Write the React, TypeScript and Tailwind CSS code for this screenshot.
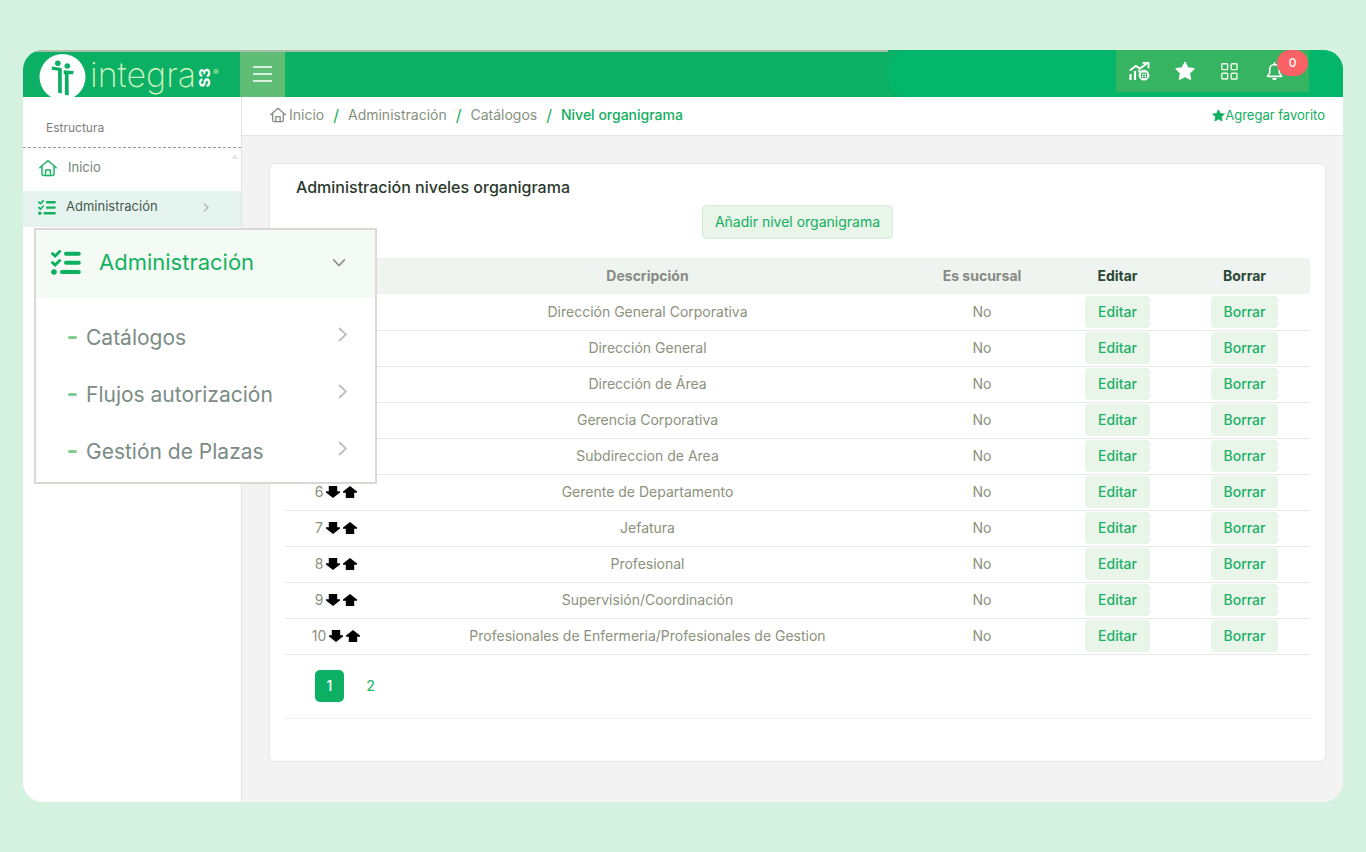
import type { ReactNode } from "react";

type Nivel = { orden: number; descripcion: string; sucursal: string };

const NIVELES: Nivel[] = [
  { orden: 1, descripcion: "Dirección General Corporativa", sucursal: "No" },
  { orden: 2, descripcion: "Dirección General", sucursal: "No" },
  { orden: 3, descripcion: "Dirección de Área", sucursal: "No" },
  { orden: 4, descripcion: "Gerencia Corporativa", sucursal: "No" },
  { orden: 5, descripcion: "Subdireccion de Area", sucursal: "No" },
  { orden: 6, descripcion: "Gerente de Departamento", sucursal: "No" },
  { orden: 7, descripcion: "Jefatura", sucursal: "No" },
  { orden: 8, descripcion: "Profesional", sucursal: "No" },
  { orden: 9, descripcion: "Supervisión/Coordinación", sucursal: "No" },
  {
    orden: 10,
    descripcion: "Profesionales de Enfermeria/Profesionales de Gestion",
    sucursal: "No",
  },
];

const SUBMENU = ["Catálogos", "Flujos autorización", "Gestión de Plazas"];

/* ==================== PÁGINA ==================== */

export default function App() {
  return (
    <div className="flex min-h-screen flex-col bg-[#d5f1df] px-[23px] py-[50px] font-['Inter',sans-serif]">
      <div className="relative flex flex-1 flex-col">
        <div className="flex flex-1 flex-col overflow-hidden rounded-[20px] bg-[#f3f3f3]">
          <Header />
          <div className="flex flex-1">
            <Sidebar />
            <main className="min-w-0 flex-1">
              <Breadcrumb />
              <NivelesCard />
            </main>
          </div>
        </div>
        <MenuFlotante />
      </div>
    </div>
  );
}

/* ==================== CABECERA ==================== */

function Header() {
  return (
    <header className="flex h-[47px] bg-[#0bb065]">
      <div className="flex min-w-0 flex-1 border-t-2 border-[#a9bfa3]">
        <a href="#" aria-label="integra S3" className="flex w-[217px] items-start pl-4">
          <LogoMark />
          <span className="ml-1 text-[34px] leading-[45px] font-extralight text-[#d0f3bd]">
            integra
          </span>
          <span className="mt-4 ml-px text-[15px] leading-4 font-bold text-white [writing-mode:sideways-lr]">
            S3
          </span>
          <span className="mt-3 text-[8px] leading-4 text-[#d5f5b4]">®</span>
        </a>
        <button
          type="button"
          aria-label="Menú"
          className="flex w-[45px] items-center justify-center bg-[#5fbd76] pb-0.5"
        >
          <svg width="19" height="16" viewBox="0 0 19 16" stroke="#fff" strokeWidth="1.3">
            <path d="M0 1h19M0 8h19M0 15h19" />
          </svg>
        </button>
      </div>
      <div className="flex w-[455px] justify-end rounded-l-[20px] bg-[#04b669] pr-[34px]">
        <div className="flex h-[42px] w-[193px] bg-[#36b461] pr-3 pl-px">
          <HeaderButton label="Indicadores">
            <ChartIcon />
          </HeaderButton>
          <HeaderButton label="Favoritos">
            <StarIcon className="size-5 text-white" />
          </HeaderButton>
          <HeaderButton label="Aplicaciones">
            <svg width="17" height="17" viewBox="0 0 17 17" fill="none" stroke="#eafbe6" strokeWidth="1.4">
              <rect x="0.8" y="0.8" width="5.8" height="5.8" rx="0.8" />
              <rect x="10.2" y="0.8" width="5.8" height="5.8" rx="0.8" />
              <rect x="0.8" y="10.2" width="5.8" height="5.8" rx="0.8" />
              <rect x="10.2" y="10.2" width="5.8" height="5.8" rx="0.8" />
            </svg>
          </HeaderButton>
          <HeaderButton label="Notificaciones">
            <svg width="17" height="19" viewBox="0 0 17 19" fill="none" stroke="#fff" strokeWidth="1.6" strokeLinejoin="round">
              <path d="M8.5 2.5c-3 0-4.8 2.2-4.8 5v3.4L1.4 14.4h14.2l-2.3-3.5V7.5c0-2.8-1.8-5-4.8-5z" />
              <path d="M8.5 0.5v2" strokeLinecap="round" />
              <path d="M6.2 16h4.6a2.3 2.3 0 0 1-4.6 0z" fill="#fff" stroke="none" />
            </svg>
            <span className="absolute top-0 left-[25px] flex h-[26px] w-[31px] items-center justify-center rounded-full bg-[#fb6165] text-xs font-medium text-white">
              0
            </span>
          </HeaderButton>
        </div>
      </div>
    </header>
  );
}

function HeaderButton({ label, children }: { label: string; children: ReactNode }) {
  return (
    <button type="button" aria-label={label} className="relative flex flex-1 items-center justify-center">
      {children}
    </button>
  );
}

function LogoMark() {
  return (
    <svg width="47" height="45" viewBox="0 0 47 45" className="shrink-0">
      <circle cx="23.5" cy="25" r="23" fill="#fff" />
      <g fill="#0bb065">
        <circle cx="18.8" cy="11.2" r="2.8" />
        <circle cx="28.3" cy="14" r="2.8" />
        <path d="M13 14.6l9.800 1.500v25.500l-3.700-.9V18.800l-1.200-.2-5.200-.9z" />
        <path d="M24.700 18.300l9.800.8-.2 3.100-4.800.1.300 21.300-3.900-.8V22.300l-1.200-.3z" />
      </g>
    </svg>
  );
}

/* ==================== MENÚ LATERAL ==================== */

function Sidebar() {
  return (
    <aside className="w-[219px] shrink-0 border-r border-[#e2e2e2] bg-white">
      <div className="flex h-[51px] items-center border-b border-dashed border-[#9a9a9a] pt-3 pl-[23px] text-xs text-[#7d7d7d]">
        Estructura
      </div>
      <nav className="text-[13px]">
        <a href="#" className="relative flex h-[43px] items-center pb-1 pl-4 text-[#72857a]">
          <HomeIcon className="mr-[11px] size-[18px] text-[#1fb363]" />
          Inicio
          <svg width="8" height="5" viewBox="0 0 8 5" className="absolute top-[6px] right-[2px]">
            <path d="M4 0l4 5H0z" fill="#e9e9e9" />
          </svg>
        </a>
        <a href="#" className="flex h-9 items-center bg-[#e6f4ef] pr-8 pb-1 pl-[15px] text-[#47594e]">
          <ChecklistIcon className="mr-[10px] h-[15px] w-[18px] text-[#12b05f]" />
          Administración
          <Chevron className="ml-auto h-[9px] w-[6px] text-[#a5afaa]" />
        </a>
      </nav>
    </aside>
  );
}

function MenuFlotante() {
  return (
    <nav
      aria-label="Administración"
      className="absolute top-[178px] left-[11px] w-[343px] border-2 border-[#dad7d4] bg-white pb-0.5"
    >
      <a href="#" className="flex h-[68px] items-center bg-[#f4fbf5] pr-8 pb-1 pl-[15px] text-[22px] text-[#14b160]">
        <ChecklistIcon className="mr-[18px] h-[25px] w-[30px] text-[#0bb05e]" />
        Administración
        <Chevron className="ml-auto h-[15px] w-[8px] rotate-90 text-[#8b918e]" />
      </a>
      <ul className="pt-[11px]">
        {SUBMENU.map((item) => (
          <li key={item}>
            <a href="#" className="flex h-[57px] items-center pr-7 pl-8 text-[21px] text-[#7a8c84]">
              <span className="mr-[9px] h-[3px] w-[9px] rounded-sm bg-[#83cc92]" />
              {item}
              <Chevron className="mb-1.5 ml-auto h-[15px] w-[9px] text-[#b9bfbc]" />
            </a>
          </li>
        ))}
      </ul>
    </nav>
  );
}

/* ==================== CONTENIDO ==================== */

function Breadcrumb() {
  return (
    <div className="flex h-[39px] items-center justify-between border-b border-[#e4e4e4] bg-white pr-[18px] pb-0.5 pl-7 text-sm">
      <nav aria-label="Ruta" className="flex items-center gap-[9px] text-[#85917f]">
        <a href="#" className="flex items-center gap-[3px]">
          <HomeIcon className="h-4 w-4" />
          Inicio
        </a>
        <Separador />
        <a href="#">Administración</a>
        <Separador />
        <a href="#">Catálogos</a>
        <Separador />
        <span className="font-medium text-[#12ae60]">Nivel organigrama</span>
      </nav>
      <a href="#" className="flex items-center text-[13px] text-[#12ae60]">
        <StarIcon className="size-[13px]" />
        Agregar favorito
      </a>
    </div>
  );
}

function Separador() {
  return <span className="text-base text-[#12ae60]">/</span>;
}

function NivelesCard() {
  return (
    <section className="mt-[27px] mr-[17px] mb-10 ml-[27px] rounded-md border border-[#e6e6e6] bg-white px-[15px] pb-[42px]">
      <h1 className="pt-[11px] pl-[11px] text-base leading-6 font-medium text-[#29392c]">
        Administración niveles organigrama
      </h1>
      <div className="mt-[6px] flex justify-center">
        <button
          type="button"
          className="h-[34px] rounded border border-[#d6ecd8] bg-[#e9f5e9] px-[12px] text-sm text-[#12ae60]"
        >
          Añadir nivel organigrama
        </button>
      </div>

      <table className="mt-[19px] w-full table-fixed text-center text-sm text-[#8b917c]">
        <thead>
          <tr className="h-9 bg-[#eff4f0] text-[#888b84]">
            <th className="w-[102px]">Nivel</th>
            <th>Descripción</th>
            <th className="w-[148px]">Es sucursal</th>
            <th className="w-[123px] text-[#2b4837]">Editar</th>
            <th className="w-[131px] text-[#2b4837]">Borrar</th>
          </tr>
        </thead>
        <tbody>
          {NIVELES.map((n) => (
            <tr key={n.orden} className="h-9 border-b border-[#e6e8e6]">
              <td>
                <div className="flex items-center justify-center gap-[3px]">
                  {n.orden}
                  <button type="button" aria-label="Bajar nivel">
                    <ArrowIcon className="rotate-180" />
                  </button>
                  <button type="button" aria-label="Subir nivel">
                    <ArrowIcon />
                  </button>
                </div>
              </td>
              <td>{n.descripcion}</td>
              <td>{n.sucursal}</td>
              <td>
                <RowButton>Editar</RowButton>
              </td>
              <td>
                <RowButton>Borrar</RowButton>
              </td>
            </tr>
          ))}
        </tbody>
      </table>

      <div className="flex h-16 items-center border-b border-[#efefef] pl-[30px] text-sm font-medium">
        <button type="button" className="h-8 w-[29px] rounded-[5px] bg-[#0bb065] text-white">
          1
        </button>
        <button type="button" className="ml-3 h-8 w-[29px] text-[#2bb56c]">
          2
        </button>
      </div>
    </section>
  );
}

function RowButton({ children }: { children: ReactNode }) {
  return (
    <button
      type="button"
      className="h-8 rounded bg-[#e9f5e9] px-[13px] align-middle text-sm font-medium text-[#1bb168]"
    >
      {children}
    </button>
  );
}

/* ==================== ICONOS ==================== */

function ArrowIcon({ className = "" }: { className?: string }) {
  return (
    <svg width="14" height="12" viewBox="0 0 14 12" className={className}>
      <path d="M7 0l7 5.500v1.300h-2.800V12H2.800V6.800H0V5.500z" fill="#000" />
    </svg>
  );
}

function Chevron({ className }: { className: string }) {
  return (
    <svg viewBox="0 0 9 15" fill="none" stroke="currentColor" strokeWidth="1.8" className={className}>
      <path d="M1 1l7 6.5L1 14" />
    </svg>
  );
}

function StarIcon({ className }: { className: string }) {
  return (
    <svg viewBox="0 0 20 20" fill="currentColor" stroke="currentColor" strokeWidth="1.2" strokeLinejoin="round" className={className}>
      <path d="M10 1.200l2.800 5.600 6.200.9-4.500 4.400 1.100 6.300L10 15.500l-5.600 2.900 1.100-6.300L1 7.700l6.200-.9z" />
    </svg>
  );
}

function HomeIcon({ className }: { className: string }) {
  return (
    <svg viewBox="0 0 18 17" fill="none" stroke="currentColor" strokeWidth="1.5" strokeLinejoin="round" strokeLinecap="round" className={className}>
      <path d="M.8 8.300L9 1l8.200 7.300" />
      <path d="M3 7v7.500A1.500 1.500 0 0 0 4.500 16h9a1.500 1.500 0 0 0 1.500-1.500V7" />
      <path d="M6.600 16v-5.600h4.800V16" />
    </svg>
  );
}

function ChecklistIcon({ className }: { className: string }) {
  return (
    <svg viewBox="0 0 30 25" fill="none" stroke="currentColor" strokeLinecap="round" className={className}>
      <path d="M15 3.700h12.800M15 12.700h12.800M11 22h16.800" strokeWidth="4" />
      <path d="M1.500 3.600l2.600 2.400 4.600-4.600M1.500 12.600l2.600 2.400 4.600-4.600" strokeWidth="2.8" />
      <circle cx="3" cy="22" r="2.8" fill="currentColor" stroke="none" />
    </svg>
  );
}

function ChartIcon() {
  return (
    <svg width="21" height="19" viewBox="0 0 21 19" fill="none" stroke="#fff">
      <path d="M1.500 12v6M6 9v9" strokeWidth="2.2" />
      <path d="M10.300 10.500v-3" strokeWidth="2" />
      <path d="M.8 8.500l6-4.500 4.200 2.500 6.500-4.800" strokeWidth="2" />
      <path d="M13.500.900h6v5.500" strokeWidth="1.8" />
      <circle cx="15" cy="13.200" r="5.4" fill="#fff" stroke="none" />
      <path d="M12.500 11h5v4.600h-5zM13.500 13.300h3M15 11v4.500" stroke="#36b461" strokeWidth="1" />
    </svg>
  );
}
